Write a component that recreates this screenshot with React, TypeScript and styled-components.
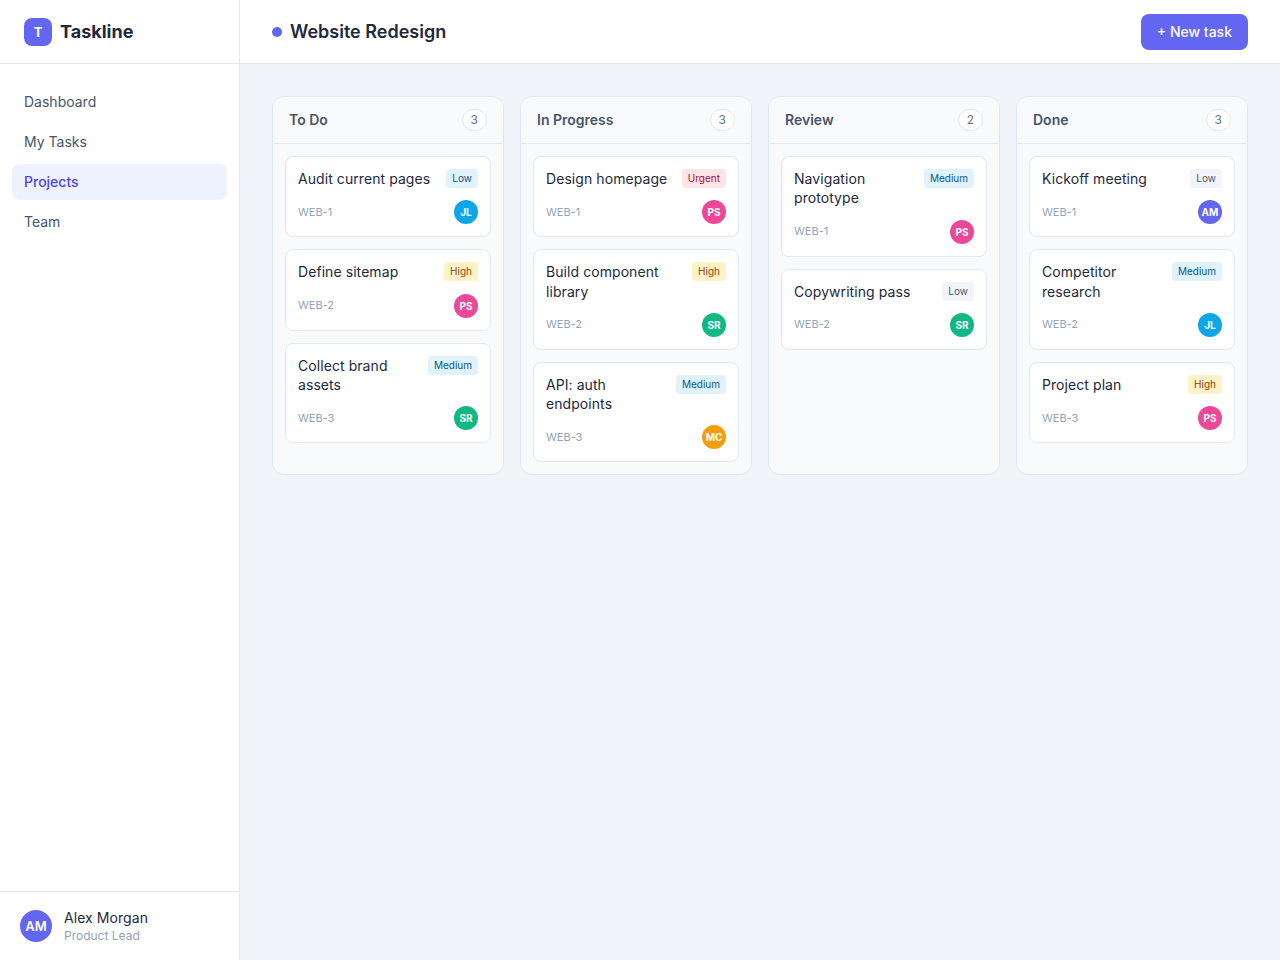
import React from "react";
import styled, { createGlobalStyle } from "styled-components";

const Global = createGlobalStyle`
  * { box-sizing: border-box; }
  html, body { margin: 0; padding: 0; height: 100%; }
  body {
    font-family: Inter, "Liberation Sans", sans-serif; background: #f1f5f9; color: #1e293b;
    -webkit-font-smoothing: antialiased; -moz-osx-font-smoothing: grayscale;
  }
`;

const Shell = styled.div`display: flex; height: 960px; overflow: hidden;`;
const Sidebar = styled.aside`
  width: 240px; flex: none; display: flex; flex-direction: column;
  background: #fff; border-right: 1px solid #e2e8f0;
`;
const Brand = styled.div`
  height: 64px; flex: none; display: flex; align-items: center; gap: 8px;
  padding: 0 24px; border-bottom: 1px solid #e2e8f0;
`;
const LogoMark = styled.div`
  width: 28px; height: 28px; border-radius: 8px; background: #6366f1; color: #fff;
  display: flex; align-items: center; justify-content: center; font-size: 13px; font-weight: 700;
`;
const BrandName = styled.span`font-size: 18px; font-weight: 700; color: #1e293b;`;
const Nav = styled.nav`flex: 1; display: flex; flex-direction: column; gap: 4px; padding: 20px 12px;`;
const NavItem = styled.a<{ $active?: boolean }>`
  display: block; padding: 8px 12px; border-radius: 8px;
  font-size: 14px; line-height: 20px; font-weight: ${(p) => (p.$active ? 500 : 400)};
  color: ${(p) => (p.$active ? "#4f46e5" : "#475569")};
  background: ${(p) => (p.$active ? "#eef2ff" : "transparent")};
`;
const UserBox = styled.div`
  display: flex; align-items: center; gap: 12px; padding: 16px 20px; border-top: 1px solid #e2e8f0;
`;
const UserAvatar = styled.div`
  width: 32px; height: 32px; border-radius: 50%; background: #6366f1; color: #fff;
  display: flex; align-items: center; justify-content: center; font-size: 13px; font-weight: 600;
`;
const UserText = styled.div`display: flex; flex-direction: column;`;
const UserName = styled.span`font-size: 14px; font-weight: 400; letter-spacing: 0.005em; line-height: 19px; color: #1e293b;`;
const UserRole = styled.span`font-size: 12px; line-height: 17px; color: #94a3b8;`;

const Main = styled.main`flex: 1; min-width: 0; display: flex; flex-direction: column;`;
const Header = styled.header`
  height: 64px; flex: none; display: flex; align-items: center; justify-content: space-between;
  padding: 0 32px; background: #fff; border-bottom: 1px solid #e2e8f0;
`;
const HeaderTitle = styled.div`display: flex; align-items: center; gap: 8px;`;
const Dot = styled.span`width: 10px; height: 10px; border-radius: 50%; background: #6366f1;`;
const Title = styled.h1`margin: 0; font-size: 18px; font-weight: 600; color: #1e293b;`;
const NewButton = styled.button`
  height: 36px; padding: 0 16px; border: 0; border-radius: 8px; background: #6366f1; color: #fff;
  font: 500 14px Inter, "Liberation Sans", sans-serif;
`;
const Board = styled.div`
  display: grid; grid-template-columns: repeat(4, 1fr); gap: 16px; padding: 32px; align-items: stretch;
`;
const Column = styled.section`
  background: #f8fafc; border: 1px solid #e2e8f0; border-radius: 12px; overflow: hidden;
`;
const ColumnHead = styled.div`
  display: flex; align-items: center; justify-content: space-between;
  padding: 12px 16px; border-bottom: 1px solid #e2e8f0;
`;
const ColumnName = styled.span`font-size: 14px; line-height: 20px; font-weight: 600; color: #475569;`;
const Count = styled.span`
  font-size: 12px; line-height: 16px; color: #64748b; background: #fff; border: 1px solid #e2e8f0;
  border-radius: 999px; padding: 2px 8px;
`;
const CardList = styled.div`display: flex; flex-direction: column; gap: 12px; padding: 12px;`;
const Card = styled.article`
  background: #fff; border: 1px solid #e2e8f0; border-radius: 8px; padding: 12px;
  display: flex; flex-direction: column; gap: 12px;
`;
const CardTop = styled.div`display: flex; align-items: flex-start; justify-content: space-between; gap: 8px;`;
const CardTitle = styled.span`font-size: 14px; font-weight: 400; letter-spacing: 0.005em; line-height: 1.375; color: #1e293b;`;
const Badge = styled.span<{ $bg: string; $fg: string }>`
  flex: none; font-size: 10px; font-weight: 400; line-height: 13px; padding: 3px 6px; border-radius: 4px;
  background: ${(p) => p.$bg}; color: ${(p) => p.$fg};
`;
const CardBottom = styled.div`display: flex; align-items: center; justify-content: space-between;`;
const CardId = styled.span`font-size: 11px; line-height: 15px; color: #94a3b8;`;
const Avatar = styled.span<{ $bg: string }>`
  width: 24px; height: 24px; border-radius: 50%; background: ${(p) => p.$bg}; color: #fff;
  display: flex; align-items: center; justify-content: center; font-size: 10px; font-weight: 700;
`;

type Tone = "slate" | "sky" | "amber" | "rose";
const tones: Record<Tone, { bg: string; fg: string }> = {
  slate: { bg: "#f1f5f9", fg: "#475569" },
  sky: { bg: "#e0f2fe", fg: "#075985" },
  amber: { bg: "#fef3c7", fg: "#92400e" },
  rose: { bg: "#ffe4e6", fg: "#9f1239" },
};
const people: Record<string, string> = { JL: "#0ea5e9", PS: "#ec4899", SR: "#10b981", MC: "#f59e0b", AM: "#6366f1" };

type Task = { title: string; priority: string; tone: Tone; who: string };
const columns: { name: string; tasks: Task[] }[] = [
  { name: "To Do", tasks: [
    { title: "Audit current pages", priority: "Low", tone: "sky", who: "JL" },
    { title: "Define sitemap", priority: "High", tone: "amber", who: "PS" },
    { title: "Collect brand assets", priority: "Medium", tone: "sky", who: "SR" },
  ] },
  { name: "In Progress", tasks: [
    { title: "Design homepage", priority: "Urgent", tone: "rose", who: "PS" },
    { title: "Build component library", priority: "High", tone: "amber", who: "SR" },
    { title: "API: auth endpoints", priority: "Medium", tone: "sky", who: "MC" },
  ] },
  { name: "Review", tasks: [
    { title: "Navigation prototype", priority: "Medium", tone: "sky", who: "PS" },
    { title: "Copywriting pass", priority: "Low", tone: "slate", who: "SR" },
  ] },
  { name: "Done", tasks: [
    { title: "Kickoff meeting", priority: "Low", tone: "slate", who: "AM" },
    { title: "Competitor research", priority: "Medium", tone: "sky", who: "JL" },
    { title: "Project plan", priority: "High", tone: "amber", who: "PS" },
  ] },
];

export default function App() {
  return (
    <Shell>
      <Global />
      <Sidebar>
        <Brand><LogoMark>T</LogoMark><BrandName>Taskline</BrandName></Brand>
        <Nav>
          <NavItem>Dashboard</NavItem>
          <NavItem>My Tasks</NavItem>
          <NavItem $active>Projects</NavItem>
          <NavItem>Team</NavItem>
        </Nav>
        <UserBox>
          <UserAvatar>AM</UserAvatar>
          <UserText><UserName>Alex Morgan</UserName><UserRole>Product Lead</UserRole></UserText>
        </UserBox>
      </Sidebar>
      <Main>
        <Header>
          <HeaderTitle><Dot /><Title>Website Redesign</Title></HeaderTitle>
          <NewButton>+ New task</NewButton>
        </Header>
        <Board>
          {columns.map((c) => (
            <Column key={c.name}>
              <ColumnHead><ColumnName>{c.name}</ColumnName><Count>{c.tasks.length}</Count></ColumnHead>
              <CardList>
                {c.tasks.map((t, i) => (
                  <Card key={t.title}>
                    <CardTop>
                      <CardTitle>{t.title}</CardTitle>
                      <Badge $bg={tones[t.tone].bg} $fg={tones[t.tone].fg}>{t.priority}</Badge>
                    </CardTop>
                    <CardBottom>
                      <CardId>WEB-{i + 1}</CardId>
                      <Avatar $bg={people[t.who]}>{t.who}</Avatar>
                    </CardBottom>
                  </Card>
                ))}
              </CardList>
            </Column>
          ))}
        </Board>
      </Main>
    </Shell>
  );
}
